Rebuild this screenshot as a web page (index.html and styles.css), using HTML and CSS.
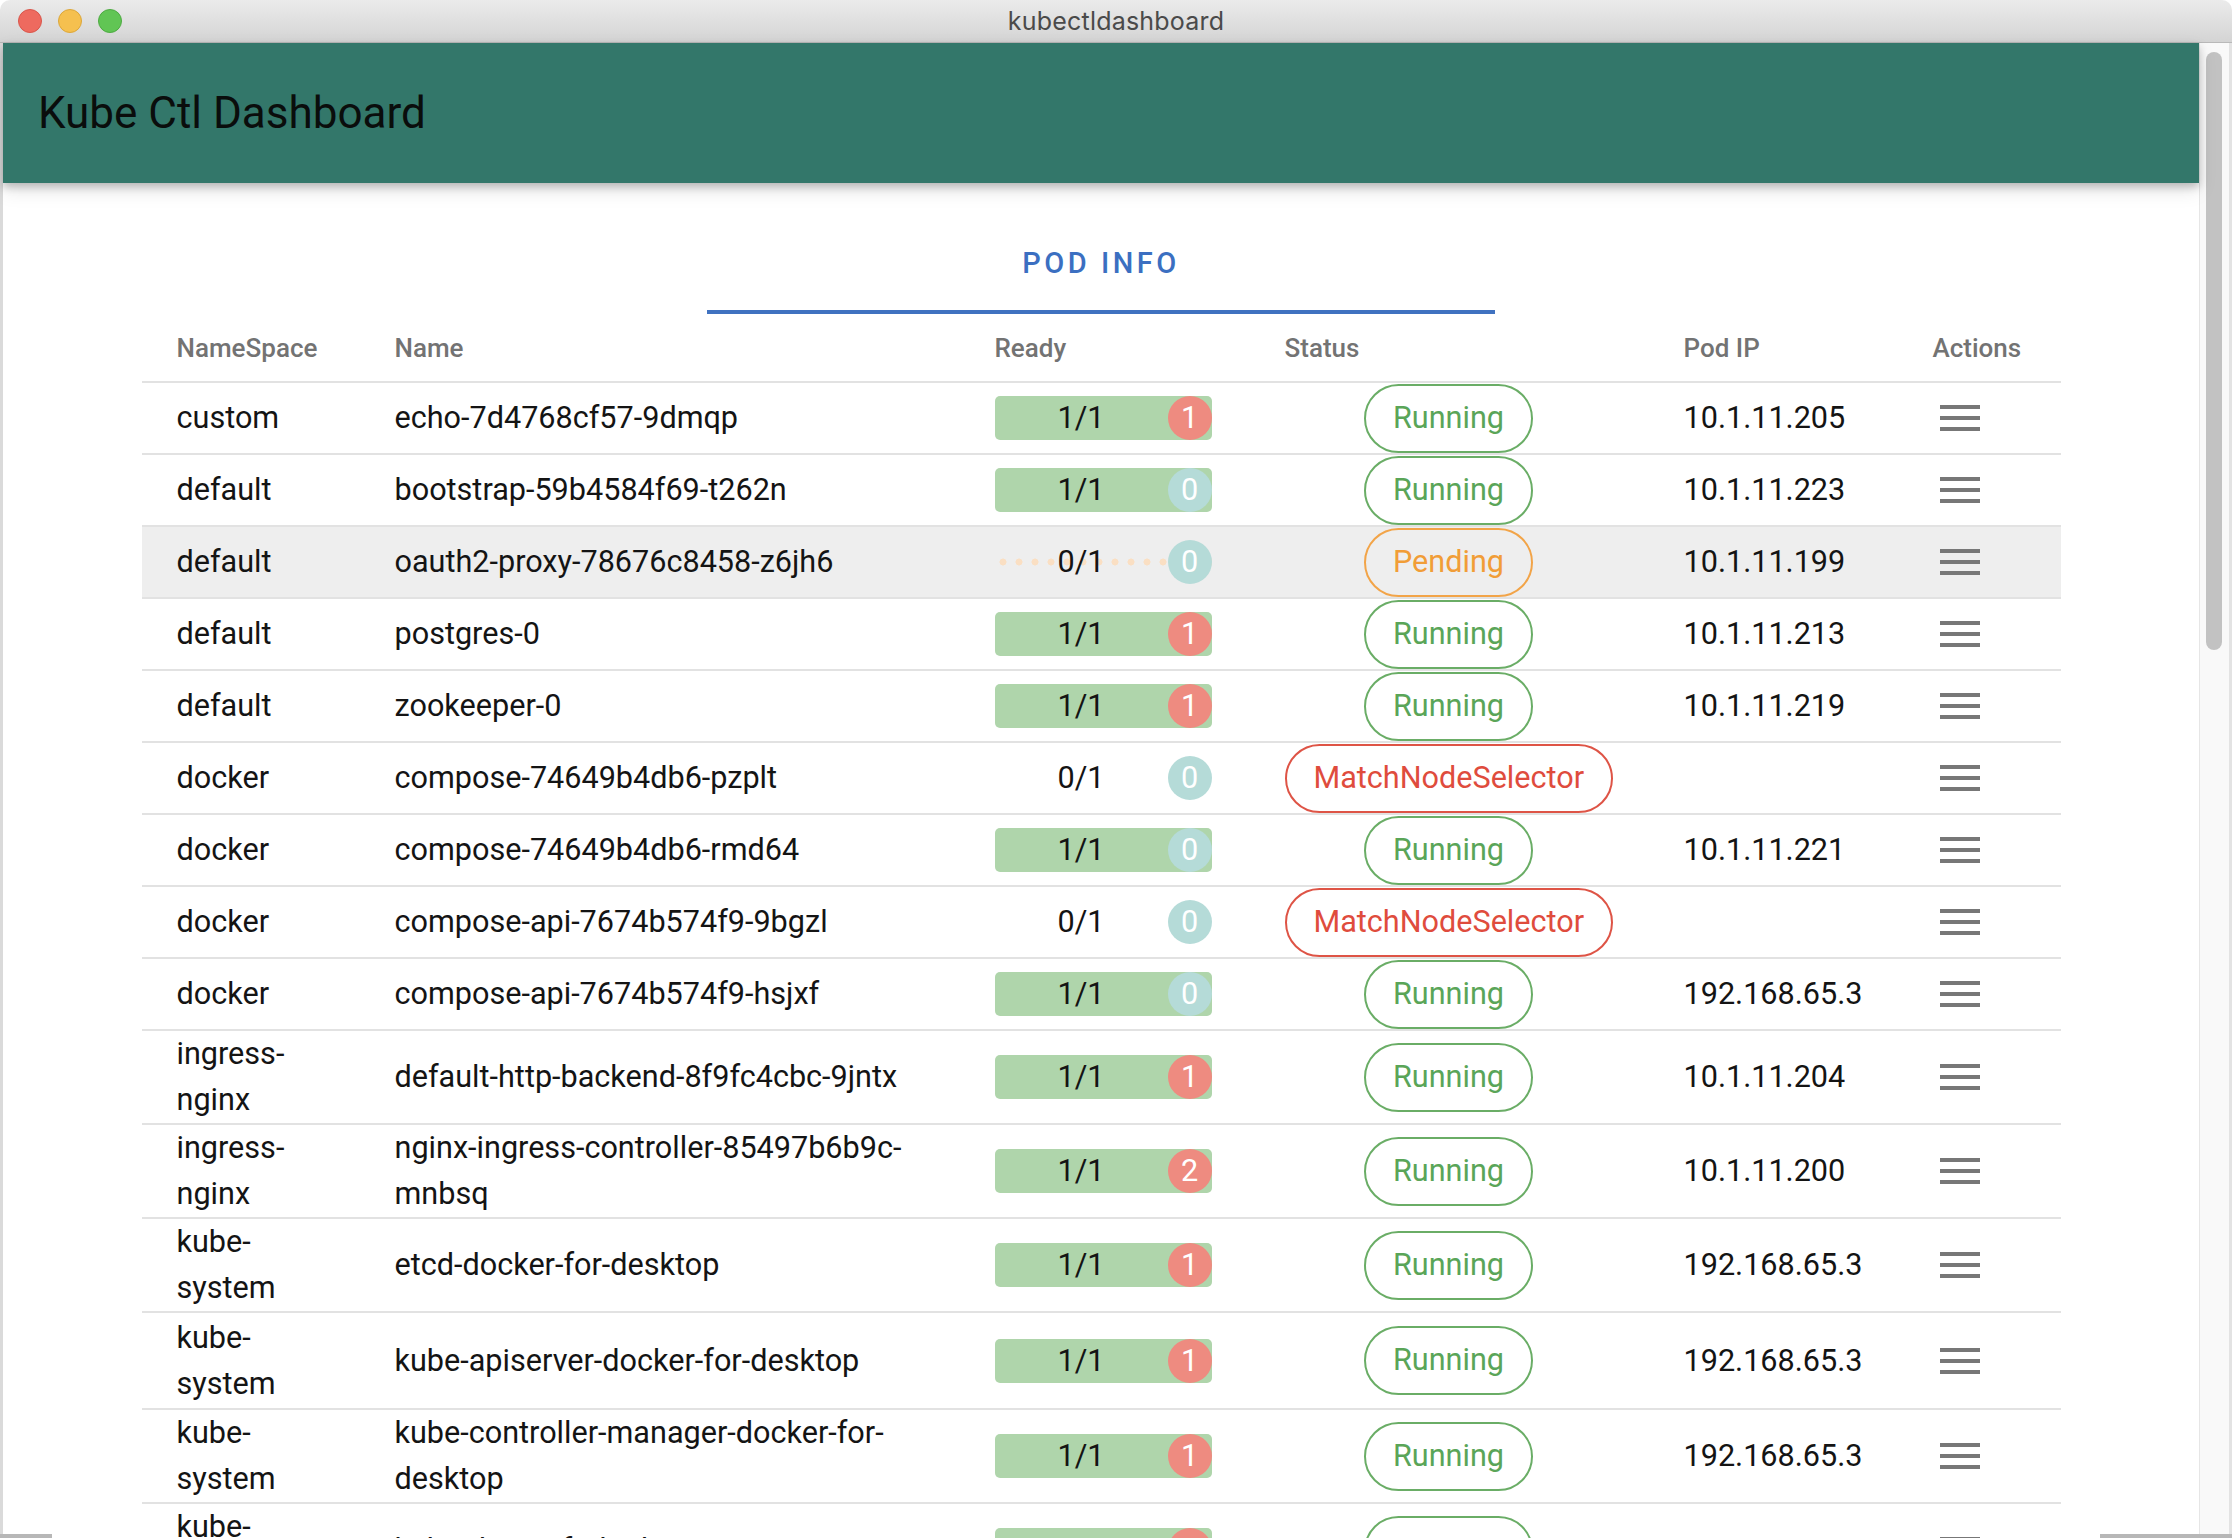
FILE: index.html
```html
<!DOCTYPE html>
<html>
<head>
<meta charset="utf-8">
<title>kubectldashboard</title>
<link rel="stylesheet" href="styles.css">
</head>
<body>
<div class="window">
  <div class="titlebar">
    <div class="lights">
      <span class="light red"></span>
      <span class="light yellow"></span>
      <span class="light green"></span>
    </div>
    <div class="wintitle">kubectldashboard</div>
    <div></div>
  </div>
  <div class="winbody">
    <div class="main">
      <header class="appbar"><h1>Kube Ctl Dashboard</h1></header>
      <div class="tabs"><div class="tab">POD INFO</div></div>
      <table class="pods">
        <colgroup>
          <col class="c-ns"><col class="c-name"><col class="c-ready"><col class="c-status"><col class="c-ip"><col class="c-act">
        </colgroup>
        <thead>
          <tr><th>NameSpace</th><th>Name</th><th>Ready</th><th>Status</th><th>Pod IP</th><th>Actions</th></tr>
        </thead>
        <tbody>
          <tr>
            <td>custom</td><td>echo-7d4768cf57-9dmqp</td>
            <td><div class="ready full"><span class="frac">1/1</span><span class="badge red">1</span></div></td>
            <td class="st"><span class="chip running">Running</span></td>
            <td>10.1.11.205</td>
            <td><svg class="menu" width="40" height="26" viewBox="0 0 40 26"><rect x="0" y="0" width="40" height="4"/><rect x="0" y="11" width="40" height="4"/><rect x="0" y="22" width="40" height="4"/></svg></td>
          </tr>
          <tr>
            <td>default</td><td>bootstrap-59b4584f69-t262n</td>
            <td><div class="ready full"><span class="frac">1/1</span><span class="badge teal">0</span></div></td>
            <td class="st"><span class="chip running">Running</span></td>
            <td>10.1.11.223</td>
            <td><svg class="menu" width="40" height="26" viewBox="0 0 40 26"><rect x="0" y="0" width="40" height="4"/><rect x="0" y="11" width="40" height="4"/><rect x="0" y="22" width="40" height="4"/></svg></td>
          </tr>
          <tr class="hl">
            <td>default</td><td>oauth2-proxy-78676c8458-z6jh6</td>
            <td><div class="ready buffer"><span class="frac">0/1</span><span class="badge teal">0</span></div></td>
            <td class="st"><span class="chip pending">Pending</span></td>
            <td>10.1.11.199</td>
            <td><svg class="menu" width="40" height="26" viewBox="0 0 40 26"><rect x="0" y="0" width="40" height="4"/><rect x="0" y="11" width="40" height="4"/><rect x="0" y="22" width="40" height="4"/></svg></td>
          </tr>
          <tr>
            <td>default</td><td>postgres-0</td>
            <td><div class="ready full"><span class="frac">1/1</span><span class="badge red">1</span></div></td>
            <td class="st"><span class="chip running">Running</span></td>
            <td>10.1.11.213</td>
            <td><svg class="menu" width="40" height="26" viewBox="0 0 40 26"><rect x="0" y="0" width="40" height="4"/><rect x="0" y="11" width="40" height="4"/><rect x="0" y="22" width="40" height="4"/></svg></td>
          </tr>
          <tr>
            <td>default</td><td>zookeeper-0</td>
            <td><div class="ready full"><span class="frac">1/1</span><span class="badge red">1</span></div></td>
            <td class="st"><span class="chip running">Running</span></td>
            <td>10.1.11.219</td>
            <td><svg class="menu" width="40" height="26" viewBox="0 0 40 26"><rect x="0" y="0" width="40" height="4"/><rect x="0" y="11" width="40" height="4"/><rect x="0" y="22" width="40" height="4"/></svg></td>
          </tr>
          <tr>
            <td>docker</td><td>compose-74649b4db6-pzplt</td>
            <td><div class="ready"><span class="frac">0/1</span><span class="badge teal">0</span></div></td>
            <td class="st"><span class="chip failed">MatchNodeSelector</span></td>
            <td></td>
            <td><svg class="menu" width="40" height="26" viewBox="0 0 40 26"><rect x="0" y="0" width="40" height="4"/><rect x="0" y="11" width="40" height="4"/><rect x="0" y="22" width="40" height="4"/></svg></td>
          </tr>
          <tr>
            <td>docker</td><td>compose-74649b4db6-rmd64</td>
            <td><div class="ready full"><span class="frac">1/1</span><span class="badge teal">0</span></div></td>
            <td class="st"><span class="chip running">Running</span></td>
            <td>10.1.11.221</td>
            <td><svg class="menu" width="40" height="26" viewBox="0 0 40 26"><rect x="0" y="0" width="40" height="4"/><rect x="0" y="11" width="40" height="4"/><rect x="0" y="22" width="40" height="4"/></svg></td>
          </tr>
          <tr>
            <td>docker</td><td>compose-api-7674b574f9-9bgzl</td>
            <td><div class="ready"><span class="frac">0/1</span><span class="badge teal">0</span></div></td>
            <td class="st"><span class="chip failed">MatchNodeSelector</span></td>
            <td></td>
            <td><svg class="menu" width="40" height="26" viewBox="0 0 40 26"><rect x="0" y="0" width="40" height="4"/><rect x="0" y="11" width="40" height="4"/><rect x="0" y="22" width="40" height="4"/></svg></td>
          </tr>
          <tr>
            <td>docker</td><td>compose-api-7674b574f9-hsjxf</td>
            <td><div class="ready full"><span class="frac">1/1</span><span class="badge teal">0</span></div></td>
            <td class="st"><span class="chip running">Running</span></td>
            <td>192.168.65.3</td>
            <td><svg class="menu" width="40" height="26" viewBox="0 0 40 26"><rect x="0" y="0" width="40" height="4"/><rect x="0" y="11" width="40" height="4"/><rect x="0" y="22" width="40" height="4"/></svg></td>
          </tr>
          <tr>
            <td>ingress-nginx</td><td>default-http-backend-8f9fc4cbc-9jntx</td>
            <td><div class="ready full"><span class="frac">1/1</span><span class="badge red">1</span></div></td>
            <td class="st"><span class="chip running">Running</span></td>
            <td>10.1.11.204</td>
            <td><svg class="menu" width="40" height="26" viewBox="0 0 40 26"><rect x="0" y="0" width="40" height="4"/><rect x="0" y="11" width="40" height="4"/><rect x="0" y="22" width="40" height="4"/></svg></td>
          </tr>
          <tr>
            <td>ingress-nginx</td><td>nginx-ingress-controller-85497b6b9c-mnbsq</td>
            <td><div class="ready full"><span class="frac">1/1</span><span class="badge red">2</span></div></td>
            <td class="st"><span class="chip running">Running</span></td>
            <td>10.1.11.200</td>
            <td><svg class="menu" width="40" height="26" viewBox="0 0 40 26"><rect x="0" y="0" width="40" height="4"/><rect x="0" y="11" width="40" height="4"/><rect x="0" y="22" width="40" height="4"/></svg></td>
          </tr>
          <tr>
            <td>kube-system</td><td>etcd-docker-for-desktop</td>
            <td><div class="ready full"><span class="frac">1/1</span><span class="badge red">1</span></div></td>
            <td class="st"><span class="chip running">Running</span></td>
            <td>192.168.65.3</td>
            <td><svg class="menu" width="40" height="26" viewBox="0 0 40 26"><rect x="0" y="0" width="40" height="4"/><rect x="0" y="11" width="40" height="4"/><rect x="0" y="22" width="40" height="4"/></svg></td>
          </tr>
          <tr class="tall">
            <td>kube-system</td><td>kube-apiserver-docker-for-desktop</td>
            <td><div class="ready full"><span class="frac">1/1</span><span class="badge red">1</span></div></td>
            <td class="st"><span class="chip running">Running</span></td>
            <td>192.168.65.3</td>
            <td><svg class="menu" width="40" height="26" viewBox="0 0 40 26"><rect x="0" y="0" width="40" height="4"/><rect x="0" y="11" width="40" height="4"/><rect x="0" y="22" width="40" height="4"/></svg></td>
          </tr>
          <tr>
            <td>kube-system</td><td>kube-controller-manager-docker-for-desktop</td>
            <td><div class="ready full"><span class="frac">1/1</span><span class="badge red">1</span></div></td>
            <td class="st"><span class="chip running">Running</span></td>
            <td>192.168.65.3</td>
            <td><svg class="menu" width="40" height="26" viewBox="0 0 40 26"><rect x="0" y="0" width="40" height="4"/><rect x="0" y="11" width="40" height="4"/><rect x="0" y="22" width="40" height="4"/></svg></td>
          </tr>
          <tr>
            <td>kube-system</td><td>kube-dns-86f4d74b45-9gz4w</td>
            <td><div class="ready full"><span class="frac">3/3</span><span class="badge red">1</span></div></td>
            <td class="st"><span class="chip running">Running</span></td>
            <td>10.1.11.202</td>
            <td><svg class="menu" width="40" height="26" viewBox="0 0 40 26"><rect x="0" y="0" width="40" height="4"/><rect x="0" y="11" width="40" height="4"/><rect x="0" y="22" width="40" height="4"/></svg></td>
          </tr>
        </tbody>
      </table>
    </div>
    <div class="scrollbar"><div class="thumb"></div></div>
  </div>
  <div class="edge edge-left"></div>
  <div class="edge edge-right"></div>
</div>
</body>
</html>
```

FILE: styles.css
```css
html, body {
  margin: 0;
  padding: 0;
  background: #ffffff;
}

.window {
  position: relative;
  width: 2232px;
  height: 1538px;
  overflow: hidden;
  display: flex;
  flex-direction: column;
  font-family: Roboto, "Liberation Sans", Arial, sans-serif;
}

/* ---------- macOS title bar ---------- */
.titlebar {
  height: 42px;
  flex: 0 0 42px;
  display: grid;
  grid-template-columns: 1fr auto 1fr;
  align-items: center;
  background: linear-gradient(#ebebeb, #d4d4d4);
  border-bottom: 1px solid #b9b9b9;
  border-radius: 10px 10px 0 0;
}

.lights {
  display: flex;
  gap: 16px;
  padding-left: 18px;
}

.light {
  width: 24px;
  height: 24px;
  border-radius: 50%;
  box-sizing: border-box;
}
.light.red { background: #ee6a5f; border: 1px solid #d9564b; }
.light.yellow { background: #f5c04f; border: 1px solid #dca73a; }
.light.green { background: #61c554; border: 1px solid #4eab42; }

.wintitle {
  font-family: Inter, "Noto Sans", sans-serif;
  font-size: 25px;
  color: #4a4a4a;
  letter-spacing: 0.2px;
}

/* ---------- window body ---------- */
.winbody {
  flex: 1;
  display: flex;
  min-height: 0;
}

.main {
  flex: 1;
  border-left: 3px solid #dadada;
  min-width: 0;
}

.appbar {
  height: 140px;
  background: #33776a;
  display: flex;
  align-items: center;
  padding-left: 35px;
  box-shadow: 0 4px 8px rgba(0, 0, 0, 0.22), 0 8px 18px rgba(0, 0, 0, 0.10);
  position: relative;
}

.appbar h1 {
  margin: 0;
  font-weight: 400;
  font-size: 44px;
  color: #0a0d0c;
}

.tabs {
  display: flex;
  justify-content: center;
  margin-top: 35px;
}

.tab {
  width: 788px;
  height: 96px;
  box-sizing: border-box;
  border-bottom: 4px solid #4072c0;
  display: flex;
  align-items: center;
  justify-content: center;
  padding-bottom: 2px;
  font-weight: 500;
  font-size: 29px;
  letter-spacing: 3.5px;
  color: #3b6fc1;
}

/* ---------- table ---------- */
.pods {
  width: 1919px;
  margin: 0 auto;
  table-layout: fixed;
  border-collapse: separate;
  border-spacing: 0;
}

.c-ns { width: 218px; }
.c-name { width: 600px; }
.c-ready { width: 290px; }
.c-status { width: 399px; }
.c-ip { width: 249px; }
.c-act { width: 163px; }

.pods th {
  height: 66px;
  padding: 1px 16px 0 35px;
  text-align: left;
  font-weight: 500;
  font-size: 26px;
  color: #737373;
  border-bottom: 2px solid #e2e2e2;
  vertical-align: middle;
}

.pods td {
  height: 70px;
  padding: 0 16px 0 35px;
  font-size: 30.6px;
  line-height: 46px;
  color: #141414;
  border-bottom: 2px solid #e2e2e2;
  vertical-align: middle;
}

.pods tr.tall td {
  height: 95px;
}

.pods td.st {
  padding-right: 36px;
  text-align: center;
}

.pods tr.hl td {
  background: #eeeeee;
}

/* ready bar */
.ready {
  width: 217px;
  height: 44px;
  border-radius: 5px;
  display: flex;
  align-items: center;
}

.ready.full {
  background: #afd5ab;
}

.ready.buffer {
  background-image: radial-gradient(circle, #fadfc3 3.2px, rgba(250, 223, 195, 0) 3.8px);
  background-size: 16px 44px;
  background-repeat: repeat-x;
}

.frac {
  width: 173px;
  text-align: center;
  color: #141414;
}

.badge {
  width: 44px;
  height: 44px;
  margin-left: auto;
  border-radius: 50%;
  display: flex;
  align-items: center;
  justify-content: center;
  color: #ffffff;
  font-size: 30.6px;
}

.badge.red { background: #ee8b80; }
.badge.teal { background: #b5dbd8; }

/* chips */
.chip {
  display: inline-flex;
  align-items: center;
  vertical-align: middle;
  height: 69px;
  box-sizing: border-box;
  padding: 0 27px;
  border: 2px solid;
  border-radius: 35px;
  font-size: 30.6px;
  line-height: 1;
  background: #ffffff;
}

.chip.running { color: #5aa558; border-color: #6aad66; }
.chip.pending { color: #f19d37; border-color: #f2a448; background: transparent; }
.chip.failed { color: #df4c3d; border-color: #de5446; }

.menu {
  display: block;
  margin-left: 7px;
  fill: #777777;
}

/* scrollbar */
.scrollbar {
  width: 33px;
  flex: 0 0 33px;
  box-sizing: border-box;
  background: #f9f9f9;
  border-left: 1px solid #e6e6e6;
  border-right: 3px solid #e3e3e3;
  padding-top: 9px;
}

.thumb {
  width: 16px;
  height: 598px;
  margin-left: 6px;
  border-radius: 8px;
  background: #c2c2c2;
}

/* bottom window edge fragments */
.edge {
  position: absolute;
  bottom: 0;
  height: 4px;
  background: #b7b7b7;
}
.edge-left { left: 0; width: 52px; }
.edge-right { right: 0; width: 132px; }
```
